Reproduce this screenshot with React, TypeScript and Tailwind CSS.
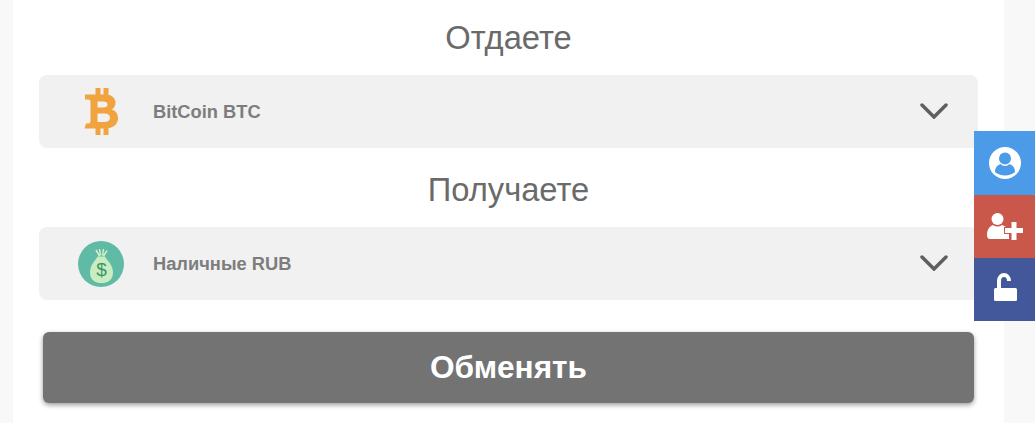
import type { ReactNode } from 'react';

const font = "font-['Liberation_Sans',Arial,sans-serif]";

function BitcoinIcon() {
  return (
    <svg width="34" height="47" viewBox="0 0 34 47" fill="#f0a33f" fillRule="evenodd">
      <path d="M1 6.500H11.500V0H16.500v6.500h3V0H24.500v6.700C29 7.700 31.500 11 31.500 14.500 31.500 18 29.800 20.500 27.500 21.500 31.500 22.500 34 25.500 34 30 34 35.500 30 39.500 24.500 40V47h-5v-6.500h-3V47h-5v-6.500H0.500L2 35.500H4.500Q6.500 35.500 6.500 33.500V13.500Q6.500 11.500 4.500 11.500H1ZM13.500 13.500v6H19C22 19.500 23.500 18.500 23.500 16.500 23.500 14.500 22 13.500 19 13.500ZM13.500 25.500v8.500H20C24 34 26 32.500 26 29.700 26 27 24 25.500 20 25.500Z" />
    </svg>
  );
}

function MoneyBagIcon() {
  return (
    <svg width="46" height="46" viewBox="0 0 46 46" className="mt-[1px]">
      <circle cx="23" cy="23" r="23" fill="#5fbba5" />
      <path d="M18 9l3.500 6M21.500 8l1 6.500M25.500 8l-1 6.500M29 9.500l-3.500 5.500" stroke="#d3efc8" strokeWidth="1.500" fill="none" />
      <path d="M19.500 15.500h7.500c1 3 8 7.500 8 16 0 8-5.500 10.500-11.500 10.500S12 39.500 12 31.500c0-8.500 6.500-13 7.500-16z" fill="#c9ecc0" />
      <text x="23.500" y="34.500" textAnchor="middle" fontSize="19" fontWeight="400" fill="#35966a" fontFamily="Liberation Sans">$</text>
    </svg>
  );
}

function Chevron() {
  return (
    <svg width="28" height="16" viewBox="0 0 28 16" fill="none" stroke="#5f5f5f" strokeWidth="3.500" strokeLinecap="round" className="-mt-[2px]">
      <path d="M2 2l12 12L26 2" />
    </svg>
  );
}

function UserCircleIcon() {
  return (
    <svg width="32" height="32" viewBox="0 0 32 32" className="ml-[1px]">
      <circle cx="16" cy="16" r="16" fill="#fff" />
      <circle cx="16" cy="11.500" r="6" fill="#4c9be8" />
      <path d="M6 25c0-5 3-7 5.500-8 2.500 2.500 6.500 2.500 9 0 2.500 1 5.500 3 5.500 8-2.500 2-6 3.500-10 3.500S8.500 27 6 25z" fill="#4c9be8" />
    </svg>
  );
}

function UserAddIcon() {
  return (
    <svg width="36" height="27" viewBox="0 0 36 27" className="ml-[1px]">
      <ellipse cx="10.500" cy="6" rx="6" ry="6" fill="#fff" />
      <path d="M0 22c0-6 3-9 6-10 3 2 6 2 9 0 3 1 7 3 7 8v6H3q-3 0-3-4z" fill="#fff" />
      <path d="M24.500 9h5v6h6.500v5h-6.500v7h-5v-7H18v-5h6.500z" fill="#fff" stroke="#c9574a" strokeWidth="2" paintOrder="stroke" />
    </svg>
  );
}

function UnlockIcon() {
  return (
    <svg width="23" height="28" viewBox="0 0 23 28" fill="none" className="mb-[5px] ml-[1px]">
      <path d="M5 16V8C5 4 7.500 2 10 2s5 2 5 6" stroke="#fff" strokeWidth="4" />
      <rect y="15" width="23" height="13" rx="1.500" fill="#fff" />
    </svg>
  );
}

function SelectRow({ icon, label }: { icon: ReactNode; label: string }) {
  return (
    <div className="flex h-[73px] items-center rounded-lg bg-[#f1f1f1] pr-[30px]">
      <div className="flex w-[114px] justify-center pl-[10px]">{icon}</div>
      <span className="flex-1 text-[18.3px] font-bold text-[#7d7d7d]">{label}</span>
      <Chevron />
    </div>
  );
}

export default function App() {
  return (
    <div className={`relative h-[423px] overflow-hidden bg-[#f8f8f8] px-[13px] ${font}`}>
      <div className="flex h-full w-[991px] flex-col bg-white px-[26px] pt-[16px]">
        <h2 className="mb-[15px] text-center text-[32.7px] leading-[44px] text-[#6a6a6a]">Отдаете</h2>
        <SelectRow icon={<BitcoinIcon />} label="BitCoin BTC" />
        <h2 className="mb-[15px] mt-[19px] text-center text-[32.7px] leading-[45px] text-[#6a6a6a]">Получаете</h2>
        <SelectRow icon={<MoneyBagIcon />} label="Наличные RUB" />
        <button className="mx-[4px] mt-[32px] h-[71px] rounded-md bg-[#737373] text-[31.6px] font-bold text-white shadow-[0_2px_5px_rgba(0,0,0,0.4)]">
          Обменять
        </button>
      </div>
      <div className="absolute left-[974px] top-[131px] flex w-[61px] flex-col">
        <div className="flex h-[64px] items-center justify-center bg-[#4c9be8]"><UserCircleIcon /></div>
        <div className="flex h-[63px] items-center justify-center bg-[#c9574a]"><UserAddIcon /></div>
        <div className="flex h-[63px] items-center justify-center bg-[#43589a]"><UnlockIcon /></div>
      </div>
    </div>
  );
}
